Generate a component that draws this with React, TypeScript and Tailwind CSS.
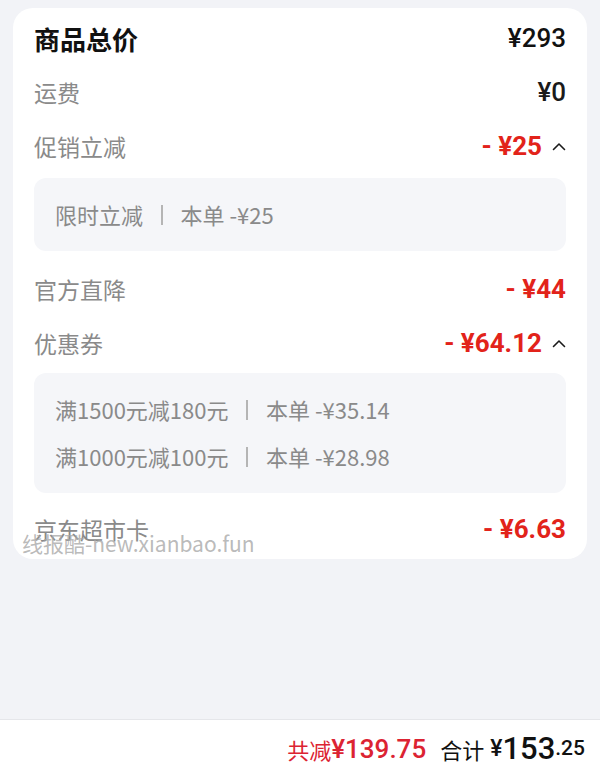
import React from "react";

const CN = "font-['Noto_Sans_CJK_SC',_'Noto_Sans',_sans-serif]";
const NUM = "font-['Roboto',_'Noto_Sans_CJK_SC',_sans-serif]";

function Chevron() {
  return (
    <svg width="14" height="9" viewBox="0 0 14 9" className="ml-[10px]">
      <polyline
        points="1.5,7.5 7,2 12.5,7.5"
        fill="none"
        stroke="#1a1a1a"
        strokeWidth="1.6"
        strokeLinecap="round"
        strokeLinejoin="round"
      />
    </svg>
  );
}

function Row({
  label,
  value,
  red,
  open,
}: {
  label: string;
  value: string;
  red?: boolean;
  open?: boolean;
}) {
  return (
    <div className="flex h-[54px] items-center justify-between">
      <span className={`${CN} text-[23px] text-[#8a8a8a]`}>{label}</span>
      <div className="flex items-center">
        <span
          className={`${NUM} text-[26px] ${
            red ? "font-bold text-[#e2231a]" : "font-medium text-[#1a1a1a]"
          }`}
        >
          {value}
        </span>
        {open && <Chevron />}
      </div>
    </div>
  );
}

function Detail({ name, amount }: { name: string; amount: string }) {
  return (
    <div className={`${CN} flex h-[47px] items-center text-[22px] text-[#8a8a8a]`}>
      <span>{name}</span>
      <span className="mx-[18px] h-[20px] w-[1.5px] bg-[#b5b5b5]" />
      <span>本单 -¥{amount}</span>
    </div>
  );
}

export default function App() {
  return (
    <main className="relative flex h-[778px] w-[600px] flex-col bg-[#f2f3f7]">
      <div className="mx-[13px] mt-2 rounded-[20px] bg-white px-[21px] pb-[3px] pt-[3px]">
        <div className="flex h-[54px] items-center justify-between">
          <span className={`${CN} text-[26px] font-bold text-[#111]`}>商品总价</span>
          <span className={`${NUM} text-[26px] font-medium text-[#111]`}>¥293</span>
        </div>
        <Row label="运费" value="¥0" />
        <Row label="促销立减" value="- ¥25" red open />
        <div className="mt-[5px] flex h-[73px] items-center rounded-[12px] bg-[#f5f6f9] px-[21px]">
          <Detail name="限时立减" amount="25" />
        </div>
        <div className="mt-[11px]">
          <Row label="官方直降" value="- ¥44" red />
        </div>
        <Row label="优惠券" value="- ¥64.12" red open />
        <div className="mt-[3px] rounded-[12px] bg-[#f5f6f9] px-[21px] py-[13px]">
          <Detail name="满1500元减180元" amount="35.14" />
          <Detail name="满1000元减100元" amount="28.98" />
        </div>
        <div className="mt-[9px]">
          <Row label="京东超市卡" value="- ¥6.63" red />
        </div>
      </div>

      <span
        className={`${CN} absolute left-[22px] top-[528px] text-[21px] text-[#a8a8a8]/80`}
      >
        线报酷-new.xianbao.fun
      </span>

      <div className="flex-1" />

      <div className="flex h-[59px] items-center justify-end border-t border-[#e5e6ea] bg-white pr-[15px]">
        <span className={`${CN} text-[22px] text-[#dc2332]`}>共减</span>
        <span className={`${NUM} text-[26px] font-medium text-[#dc2332]`}>¥139.75</span>
        <span className={`${CN} ml-[14px] text-[22px] text-[#111]`}>合计</span>
        <span className={`${NUM} ml-[6px] text-[23px] font-medium text-[#111]`}>¥</span>
        <span className={`${NUM} text-[31px] font-medium text-[#111]`}>153</span>
        <span className={`${NUM} text-[21px] font-medium text-[#111]`}>.25</span>
      </div>
    </main>
  );
}
